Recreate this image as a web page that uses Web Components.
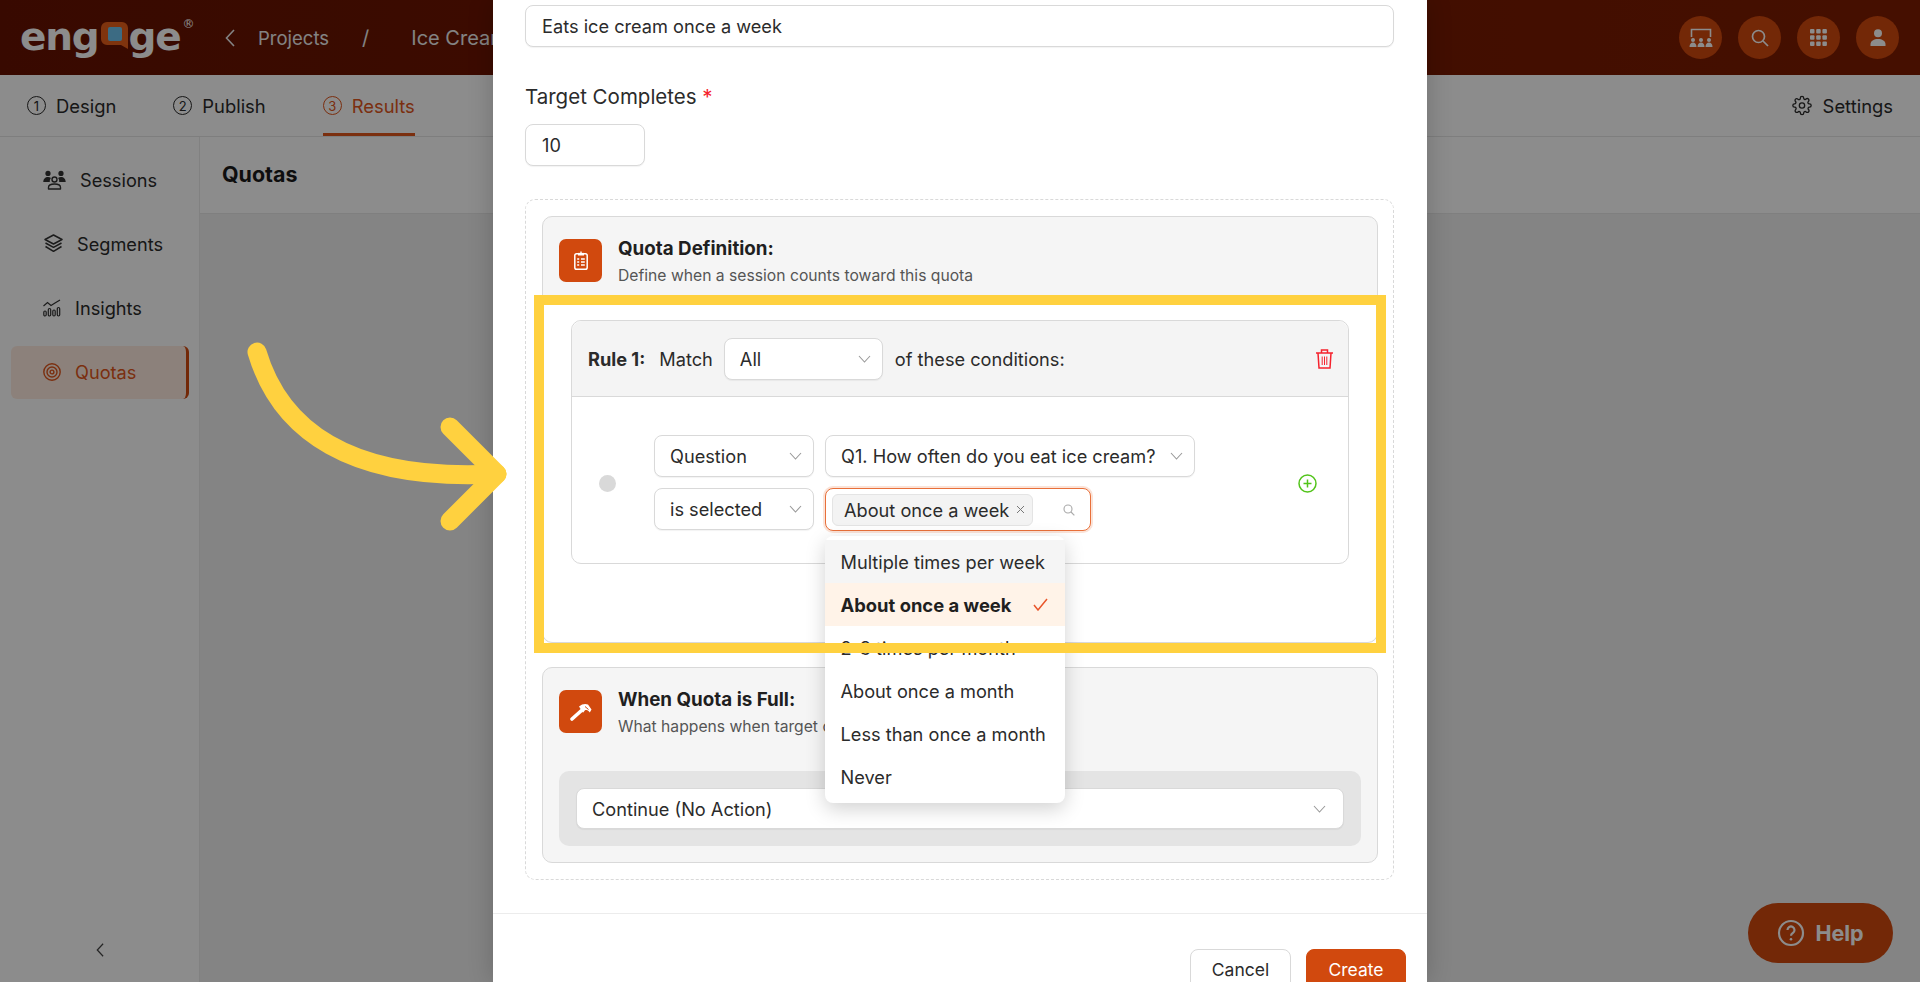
<!DOCTYPE html>
<html>
<head>
<meta charset="utf-8">
<title>Quotas</title>
<style>
  html, body { margin: 0; height: 100%; overflow: hidden; }
  body {
    position: relative;
    width: 1920px;
    height: 982px;
    font-family: Inter, "Liberation Sans", sans-serif;
    font-size: 18.2px;
    color: #2b2b2b;
  }
  #dim { position: absolute; inset: 0; background: rgba(0,0,0,.45); }
  #arrow { position: absolute; left: 0; top: 0; }
</style>
</head>
<body>
  <app-shell></app-shell>
  <help-button></help-button>
  <div id="dim"></div>
  <quota-modal>
    <text-field style="height:42px">Eats ice cream once a week</text-field>
    <field-label>Target Completes</field-label>
    <text-field style="width:120px;height:42px">10</text-field>
  </quota-modal>
  <svg id="arrow" width="1920" height="982" fill="none" stroke="#ffd13f" stroke-width="19" stroke-linecap="round" stroke-linejoin="round">
    <path d="M257 352C280 430 350 482 497 474"/>
    <path d="M450 427L497 474L450 521"/>
  </svg>

<script>
const ICONS = {
  back: '<svg width="10" height="18" viewBox="0 0 10 18" fill="none" stroke="currentColor" stroke-width="1.6"><path d="M9 1L1.5 9L9 17"/></svg>',
  chevron: '<svg width="13" height="8" viewBox="0 0 13 8" fill="none" stroke="currentColor" stroke-width="1.1"><path d="M1 1l5.5 6L12 1"/></svg>',
  gear: '<svg width="20" height="21" viewBox="0 0 24 24" fill="none" stroke="currentColor" stroke-width="1.6" stroke-linejoin="round"><circle cx="12" cy="12" r="3.2"/><path d="M19.4 15a1.65 1.65 0 0 0 .33 1.82l.06.06a2 2 0 1 1-2.83 2.83l-.06-.06a1.65 1.65 0 0 0-2.82 1.17V21a2 2 0 0 1-4 0v-.09A1.65 1.65 0 0 0 7.26 19.7l-.06.06a2 2 0 1 1-2.83-2.83l.06-.06A1.65 1.65 0 0 0 3.26 14H3a2 2 0 0 1 0-4h.09A1.65 1.65 0 0 0 4.3 7.26l-.06-.06a2 2 0 1 1 2.83-2.83l.06.06A1.65 1.65 0 0 0 10 3.26V3a2 2 0 0 1 4 0v.09a1.65 1.65 0 0 0 2.82 1.17l.06-.06a2 2 0 1 1 2.83 2.83l-.06.06A1.65 1.65 0 0 0 20.74 10H21a2 2 0 0 1 0 4h-.09a1.65 1.65 0 0 0-1.51 1z"/></svg>',
  sessions: '<svg width="23" height="20" viewBox="0 0 23 20" fill="#333"><circle cx="5" cy="3.4" r="2.6"/><circle cx="18" cy="3.4" r="2.6"/><path d="M.3 12c0-3 2-5 4.7-5 1.2 0 2.2.4 3 1-.9.9-1.3 2.3-1.2 4z"/><path d="M22.700 12c0-3-2-5-4.700-5-1.200 0-2.200.4-3 1 .9.9 1.300 2.300 1.200 4z"/><circle cx="11.500" cy="9.500" r="2.500" fill="none" stroke="#333" stroke-width="1.400"/><path d="M5.500 19v-1.500c0-2.500 2.500-3.500 6-3.500s6 1 6 3.500V19z" fill="none" stroke="#333" stroke-width="1.400" stroke-linejoin="round"/></svg>',
  segments: '<svg width="19" height="19" viewBox="0 0 19 19" fill="none" stroke="#333" stroke-width="1.500" stroke-linejoin="round"><path d="M9.500 1L18 5.500 9.500 10 1 5.500z"/><path d="M1.500 9l8 4.300 8-4.300"/><path d="M1.500 12.500l8 4.800 8-4.800"/></svg>',
  insights: '<svg width="18" height="18" viewBox="0 0 18 18" fill="none" stroke="#333" stroke-width="1.200"><path d="M.5 7l4-3.500 3.500 3L12 4l5-3"/><rect x=".8" y="12" width="2.400" height="5" rx="1.200"/><rect x="5.300" y="9.500" width="2.400" height="7.500" rx="1.200"/><rect x="9.800" y="11" width="2.400" height="6" rx="1.200"/><rect x="14.300" y="8.500" width="2.400" height="8.500" rx="1.200"/></svg>',
  target: '<svg width="18" height="18" viewBox="0 0 18 18" fill="none" stroke="currentColor" stroke-width="1.400"><circle cx="9" cy="9" r="8.200"/><circle cx="9" cy="9" r="5"/><circle cx="9" cy="9" r="1.900"/></svg>',
  display: '<svg width="24" height="20" viewBox="0 0 24 20" fill="currentColor"><path d="M2.500 9V1.500h19V9" fill="none" stroke="currentColor" stroke-width="1.600"/><circle cx="4" cy="12" r="2"/><circle cx="12" cy="12" r="2"/><circle cx="20" cy="12" r="2"/><path d="M.5 19c0-3 1.500-4.500 3.500-4.500S7.500 16 7.500 19zM8.500 19c0-3 1.500-4.500 3.500-4.500s3.500 1.500 3.500 4.500zM16.500 19c0-3 1.500-4.500 3.500-4.500s3.500 1.500 3.500 4.500z"/></svg>',
  search: '<svg width="18" height="18" viewBox="0 0 18 18" fill="none" stroke="currentColor" stroke-width="1.700"><circle cx="7.500" cy="7.500" r="6"/><path d="M12 12l5 5"/></svg>',
  grid: '<svg width="17" height="17" viewBox="0 0 17 17" fill="currentColor"><rect width="4.500" height="4.500" rx="1"/><rect x="6.200" width="4.500" height="4.500" rx="1"/><rect x="12.400" width="4.500" height="4.500" rx="1"/><rect y="6.200" width="4.500" height="4.500" rx="1"/><rect x="6.200" y="6.200" width="4.500" height="4.500" rx="1"/><rect x="12.400" y="6.200" width="4.500" height="4.500" rx="1"/><rect y="12.400" width="4.500" height="4.500" rx="1"/><rect x="6.200" y="12.400" width="4.500" height="4.500" rx="1"/><rect x="12.400" y="12.400" width="4.500" height="4.500" rx="1"/></svg>',
  user: '<svg width="16" height="17" viewBox="0 0 16 17" fill="currentColor"><circle cx="8" cy="4.200" r="4"/><path d="M.5 17v-2c0-3 3.500-5 7.500-5s7.500 2 7.500 5v2z"/></svg>',
  clipboard: '<svg width="14" height="19" viewBox="0 0 14 19" fill="none" stroke="#fff" stroke-width="1.500"><rect x=".8" y="2.800" width="12.400" height="15.400" rx="1.800"/><path d="M4 3.200h6" stroke-width="2.600"/><path d="M7 .6v1.500" stroke-width="1.400"/><path d="M3.200 8h2M7 8h3.800M3.200 11h2M7 11h3.800M3.200 14h2M7 14h3.800" stroke-width="1.300"/></svg>',
  hammer: '<svg width="22" height="18" viewBox="0 0 22 18" fill="none"><path d="M2 16L11.500 7.500" stroke="#fff" stroke-width="3.600" stroke-linecap="round"/><path d="M9 3.500C12 .8 15.500.4 18 1.500L21.500 6.500 19.800 9.500C18.500 7.200 16.800 6.400 15 7.200L13 9.800z" fill="#fff"/><path d="M15 3.500l3.500 3" stroke="#d1490e" stroke-width="1"/></svg>',
  trash: '<svg width="17" height="20" viewBox="0 0 17 20" fill="none" stroke="#f5222d" stroke-width="1.500"><path d="M0 4h17M5.500 4V1h6v3"/><path d="M2 4l1 15h11l1-15"/><path d="M6.200 7.500v8.500M8.500 7.500v8.500M10.800 7.500v8.500" stroke-width="1"/></svg>',
  plus: '<svg width="19" height="19" viewBox="0 0 19 19" fill="none" stroke="#52c41a" stroke-width="1.500"><circle cx="9.500" cy="9.500" r="8.500"/><path d="M9.500 5.500v8M5.500 9.500h8"/></svg>',
  x: '<svg width="9" height="9" viewBox="0 0 9 9" fill="none" stroke="#777" stroke-width="1"><path d="M1 1l7 7M8 1L1 8"/></svg>',
  check: '<svg width="15" height="13" viewBox="0 0 15 13" fill="none" stroke="#e8552a" stroke-width="1.500"><path d="M1 7l4 5L14 1"/></svg>',
  help: '<svg width="28" height="28" viewBox="0 0 28 28" fill="none" stroke="currentColor" stroke-width="2.200"><circle cx="14" cy="14" r="12"/><path d="M10.500 11a3.500 3.500 0 1 1 5.300 3c-1.300.8-1.800 1.500-1.800 2.700"/><circle cx="14" cy="20.300" r="1.300" fill="currentColor" stroke="none"/></svg>'
};

// shared base: every element stamps its own shadow markup
class Shadowed extends HTMLElement {
  constructor() {
    super();
    this.attachShadow({mode: 'open'});
    this.shadowRoot.innerHTML = this.markup();
  }
}

class AppLogo extends Shadowed {
  markup() {
    return `<style>
      :host { display: flex; align-items: flex-start; width: 190px; height: 40px; color: #fff;
        font: 700 39px/37px "DejaVu Sans", sans-serif; letter-spacing: -1.2px; }
      .bubble { width: 27px; height: 27px; margin: 4px 1px 0 2px; flex: none; }
      sup { font: 400 12px/12px "DejaVu Sans", sans-serif; letter-spacing: 0; margin-left: 2px; margin-top: 0; }
    </style>
    <span>eng</span>
    <svg class="bubble" viewBox="0 0 27 27"><path d="M6 0h15a6 6 0 0 1 6 6v21l-7-4H6a6 6 0 0 1-6-6V6a6 6 0 0 1 6-6z" fill="#e8601a"/><rect x="7" y="5" width="14" height="14" rx="2" fill="#6dc3ee"/></svg>
    <span>ge</span><sup>®</sup>`;
  }
}

class AppHeader extends Shadowed {
  markup() {
    return `<style>
      :host { display: flex; align-items: center; height: 75px; background: linear-gradient(90deg, #671200, #7f1d00);
        color: #fff; padding: 0 21px 0 20px; box-sizing: border-box; }
      app-logo { margin-right: 15px; }
      .crumb { display: flex; align-items: center; font-size: 18.500px; color: #eee; }
      .projects { margin-left: 23px; }
      .slash { margin: 0 42px 0 33px; font-size: 20px; }
      .title { font-size: 20px; white-space: nowrap; }
      .tools { margin-left: auto; display: flex; gap: 16px; }
      .tool { width: 43px; height: 43px; border-radius: 50%; background: #d1490e; display: flex; align-items: center; justify-content: center; }
    </style>
    <app-logo></app-logo>
    <div class="crumb">${ICONS.back}<span class="projects">Projects</span><span class="slash">/</span><span class="title">Ice Cream</span></div>
    <div class="tools">
      <span class="tool">${ICONS.display}</span><span class="tool">${ICONS.search}</span><span class="tool">${ICONS.grid}</span><span class="tool">${ICONS.user}</span>
    </div>`;
  }
}

class StepTab extends Shadowed {
  markup() {
    return `<style>
      :host { display: flex; align-items: center; gap: 10px; height: 61px; box-sizing: border-box; font-size: 18.400px; }
      :host([active]) { color: #e0561c; box-shadow: inset 0 -3px 0 #e0561c; }
      .n { width: 19px; height: 19px; border: 1.300px solid currentColor; border-radius: 50%; box-sizing: border-box;
        display: flex; align-items: center; justify-content: center; font-size: 13px; }
    </style><span class="n"><slot name="n"></slot></span><slot></slot>`;
  }
}

class StepBar extends Shadowed {
  markup() {
    return `<style>
      :host { display: flex; align-items: center; height: 62px; padding: 0 27px; box-sizing: border-box; background: #fff; border-bottom: 1px solid #e6e6e6; }
      .tabs { display: flex; gap: 57px; }
      .settings { margin-left: auto; display: flex; align-items: center; gap: 11px; font-size: 18.400px; }
    </style>
    <div class="tabs">
      <step-tab><span slot="n">1</span>Design</step-tab>
      <step-tab><span slot="n">2</span>Publish</step-tab>
      <step-tab active><span slot="n">3</span>Results</step-tab>
    </div>
    <div class="settings">${ICONS.gear}Settings</div>`;
  }
}

class NavItem extends Shadowed {
  markup() {
    return `<style>
      :host { display: flex; align-items: center; gap: 14px; height: 53px; padding: 0 0 2px 32px; margin-bottom: 11px; box-sizing: border-box; border-radius: 6px; }
      :host([active]) { background: #ffece0; color: #e0561c; border-right: 3px solid #d1490e; }
    </style><slot name="icon"></slot><slot></slot>`;
  }
}

class SideNav extends Shadowed {
  markup() {
    return `<style>
      :host { display: flex; flex-direction: column; flex: none; width: 200px; box-sizing: border-box; padding: 17px 10px 0 11px; background: #fff; border-right: 1px solid #ececec; }
      .collapse { margin-top: auto; height: 43px; text-align: center; color: #444; }
      .collapse svg { width: 8px; height: 14px; }
    </style>
    <nav-item><span slot="icon" style="display:flex">${ICONS.sessions}</span>Sessions</nav-item>
    <nav-item><span slot="icon" style="display:flex;margin-left:1px">${ICONS.segments}</span>Segments</nav-item>
    <nav-item><span slot="icon" style="display:flex">${ICONS.insights}</span>Insights</nav-item>
    <nav-item active><span slot="icon" style="display:flex">${ICONS.target}</span>Quotas</nav-item>
    <div class="collapse">${ICONS.back}</div>`;
  }
}

class AppShell extends Shadowed {
  markup() {
    return `<style>
      :host { display: flex; flex-direction: column; height: 982px; }
      .main { flex: 1; display: flex; min-height: 0; }
      .content { flex: 1; background: #f0f0f0; }
      .title { height: 77px; background: #fff; border-bottom: 1px solid #e8e8e8; box-sizing: border-box; padding: 0 22px 2px; display: flex; align-items: center; font-weight: 700; font-size: 21.400px; color: #1a1a1a; }
    </style>
    <app-header></app-header>
    <step-bar></step-bar>
    <div class="main">
      <side-nav></side-nav>
      <div class="content"><div class="title">Quotas</div></div>
    </div>`;
  }
}

class HelpButton extends Shadowed {
  markup() {
    return `<style>
      :host { position: absolute; left: 1748px; top: 903px; width: 145px; height: 60px; border-radius: 30px; background: #d1490e; color: #fff;
        display: flex; align-items: center; justify-content: center; gap: 10px; font-weight: 700; font-size: 21.500px; box-sizing: border-box; }
    </style>${ICONS.help}Help`;
  }
}

class TextField extends Shadowed {
  markup() {
    return `<style>
      :host { display: flex; align-items: center; box-sizing: border-box; padding: 0 16px; background: #fff; border: 1px solid #d9d9d9; border-radius: 8px; box-shadow: 0 1px 1px rgba(0,0,0,.05); }
    </style><slot></slot>`;
  }
}

class FieldLabel extends Shadowed {
  markup() {
    return `<style>
      :host { display: block; line-height: 24px; margin: 37px 0 16px; font-size: 20.500px; padding-top: 1px; margin-bottom: 15px; }
      b { color: #f5222d; font-weight: 400; }
    </style><slot></slot> <b>*</b>`;
  }
}

class UiSelect extends Shadowed {
  markup() {
    return `<style>
      :host { display: flex; align-items: center; justify-content: space-between; box-sizing: border-box; height: 42px; padding: 0 11px 0 15px; background: #fff; border: 1px solid #d9d9d9; border-radius: 8px; box-shadow: 0 1px 1px rgba(0,0,0,.05); white-space: nowrap; }
      span { color: #999; display: flex; }
    </style><slot></slot><span>${ICONS.chevron}</span>`;
  }
}

class SectionIcon extends Shadowed {
  markup() {
    return `<style>
      :host { display: flex; align-items: center; justify-content: center; width: 43px; height: 43px; border-radius: 7px; background: #d1490e; flex: none; }
    </style><slot></slot>`;
  }
}

class SectionHead extends Shadowed {
  markup() {
    return `<style>
      :host { display: flex; gap: 16px; }
      h3 { margin: 0 0 8px; font-size: 18.800px; line-height: 20px; font-weight: 700; color: #1f1f1f; }
      p { margin: 0; font-size: 15.700px; line-height: 18px; color: #555; white-space: nowrap; }
    </style><slot name="icon"></slot><div><h3><slot name="title"></slot></h3><p><slot></slot></p></div>`;
  }
}

class OptionList extends Shadowed {
  markup() {
    return `<style>
      :host { position: absolute; left: -1.500px; top: calc(100% + 6px); width: 240px; padding: 4px 0 5px; box-sizing: border-box; background: #fff; border-radius: 8px; box-shadow: 0 6px 20px rgba(0,0,0,.18); z-index: 2; }
      div { display: flex; align-items: center; justify-content: space-between; height: 43px; padding: 0 17px 0 16px; box-sizing: border-box; white-space: nowrap; }
      .hover { background: #f5f5f5; }
      .on { background: #fff3e8; font-weight: 700; color: #1f1f1f; font-size: 18.400px; }
    </style>
    <div class="hover">Multiple times per week</div>
    <div class="on">About once a week ${ICONS.check}</div>
    <div>2-3 times per month</div>
    <div>About once a month</div>
    <div>Less than once a month</div>
    <div>Never</div>`;
  }
}

class MultiSelect extends Shadowed {
  markup() {
    return `<style>
      :host { display: flex; align-items: center; position: relative; box-sizing: border-box; width: 266px; height: 43px; padding: 0 15px 0 6px; background: #fff; border: 1.500px solid #e8703a; border-radius: 8px; box-shadow: 0 0 0 2px #fbe3d8; }
      .tag { display: flex; align-items: center; gap: 7px; height: 32px; width: 201px; box-sizing: border-box; padding: 0 6px 0 11px; background: #f3f3f3; border: 1px solid #e4e4e4; border-radius: 6px; white-space: nowrap; }
      .find { margin-left: auto; color: #aaa; display: flex; }
      .find svg { width: 12px; height: 12px; }
    </style>
    <span class="tag"><slot></slot>${ICONS.x}</span>
    <span class="find">${ICONS.search}</span>
    <option-list></option-list>`;
  }
}

class RuleCard extends Shadowed {
  markup() {
    return `<style>
      :host { display: block; border: 1px solid #d9d9d9; border-radius: 10px; background: #fff; height: 244px; box-sizing: border-box; }
      .head { display: flex; align-items: center; height: 75px; padding: 0 15px 0 16px; background: #f4f4f4; border-bottom: 1px solid #d9d9d9; border-radius: 10px 10px 0 0; }
      b { font-weight: 700; margin-right: 14px; }
      .head ui-select { width: 159px; margin: 0 12px 0 11px; }
      .trash { margin-left: auto; display: flex; }
      .body { display: flex; align-items: center; padding: 38px 31px 0 27px; }
      .dot { width: 17px; height: 17px; border-radius: 50%; background: #d9d9d9; margin-right: 38px; flex: none; }
      .rows { display: grid; grid-template-columns: 160px auto; gap: 11px; justify-content: start; }
      .q { width: 370px; }
      .plus { margin-left: auto; display: flex; }
    </style>
    <div class="head"><b>Rule 1:</b>Match<ui-select>All</ui-select>of these conditions:<span class="trash">${ICONS.trash}</span></div>
    <div class="body">
      <span class="dot"></span>
      <div class="rows">
        <ui-select>Question</ui-select><ui-select class="q">Q1. How often do you eat ice cream?</ui-select>
        <ui-select>is selected</ui-select><multi-select>About once a week</multi-select>
      </div>
      <span class="plus">${ICONS.plus}</span>
    </div>`;
  }
}

class QuotaModal extends Shadowed {
  markup() {
    return `<style>
      :host { position: absolute; left: 493px; top: 0; width: 934px; height: 982px; overflow: hidden; background: #fff; box-shadow: 0 0 24px rgba(0,0,0,.2); }
      .pad { padding: 5px 33px 0 32px; }
      .dashed { margin-top: 33px; padding: 16px 15px 16px 16px; border: 1px dashed #d9d9d9; border-radius: 10px; display: flex; flex-direction: column; gap: 24px; }
      .card { border: 1px solid #d9d9d9; border-radius: 10px; background: #f5f5f5; }
      .def { height: 427px; box-sizing: border-box; }
      .def .top { height: 83px; box-sizing: border-box; padding: 22px 16px 0; }
      .def .bottom { background: #fff; height: 342px; padding: 20px 28px 0; box-sizing: border-box; border-radius: 0 0 10px 10px; }
      .full { height: 196px; box-sizing: border-box; padding: 22px 16px 0; }
      .action { margin-top: 35px; height: 75px; box-sizing: border-box; padding: 17px; background: #e4e4e4; border-radius: 10px; }
      .action ui-select { height: 41px; padding-right: 17px; }
      .foot { margin-top: 33px; height: 70px; border-top: 1px solid #ececec; display: flex; justify-content: flex-end; gap: 15px; padding: 35px 21px 0 0; }
      button { font: inherit; font-size: 17.500px; height: 41px; border-radius: 8px; width: 101px; border: 1px solid #d9d9d9; background: #fff; color: #2b2b2b; padding: 0; }
      button.primary { width: 100px; background: #d1490e; border-color: #d1490e; color: #fff; }
      .mark { position: absolute; left: 41px; top: 295px; width: 852px; height: 358px; box-sizing: border-box; border: 10px solid #ffd13f; z-index: 3; }
    </style>
    <div class="pad">
      <slot></slot>
      <div class="dashed">
        <div class="card def">
          <div class="top"><section-head><section-icon slot="icon">${ICONS.clipboard}</section-icon><span slot="title">Quota Definition:</span>Define when a session counts toward this quota</section-head></div>
          <div class="bottom"><rule-card></rule-card></div>
        </div>
        <div class="card full">
          <section-head><section-icon slot="icon">${ICONS.hammer}</section-icon><span slot="title">When Quota is Full:</span>What happens when target count is reached</section-head>
          <div class="action"><ui-select>Continue (No Action)</ui-select></div>
        </div>
      </div>
    </div>
    <div class="foot"><button>Cancel</button><button class="primary">Create</button></div>
    <div class="mark"></div>`;
  }
}

customElements.define('app-logo', AppLogo);
customElements.define('app-header', AppHeader);
customElements.define('step-tab', StepTab);
customElements.define('step-bar', StepBar);
customElements.define('nav-item', NavItem);
customElements.define('side-nav', SideNav);
customElements.define('app-shell', AppShell);
customElements.define('help-button', HelpButton);
customElements.define('text-field', TextField);
customElements.define('field-label', FieldLabel);
customElements.define('ui-select', UiSelect);
customElements.define('section-icon', SectionIcon);
customElements.define('section-head', SectionHead);
customElements.define('option-list', OptionList);
customElements.define('multi-select', MultiSelect);
customElements.define('rule-card', RuleCard);
customElements.define('quota-modal', QuotaModal);
</script>
</body>
</html>
